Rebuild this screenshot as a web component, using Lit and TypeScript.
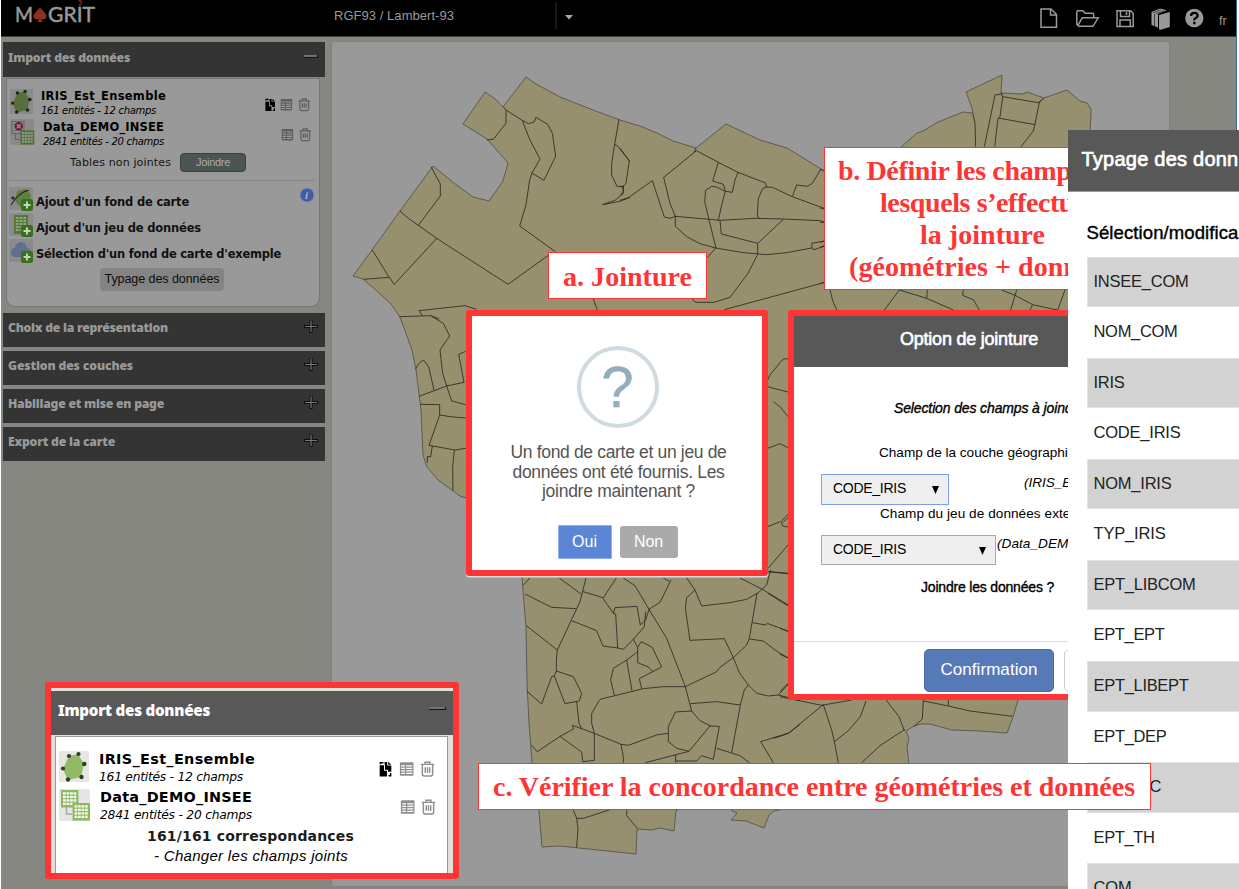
import { LitElement, html, css, svg } from 'lit';
import { customElement, property } from 'lit/decorators.js';

/** One line of text whose tracking is adjusted so that it spans `w` pixels. */
@customElement('fit-label')
class FitLabel extends LitElement {
  @property({ type: Number }) w = 0;
  static styles = css`
    :host { display: inline-block; white-space: pre; flex: none; }
  `;
  firstUpdated() {
    const natural = this.getBoundingClientRect().width;
    const n = (this.textContent || '').length;
    if (this.w && n) this.style.letterSpacing = `${((this.w - natural) / n).toFixed(3)}px`;
  }
  render() { return html`<slot></slot>`; }
}

const OUTLINE = 'M353 276L372 250 400 211 433 166 454 183 473 197 489 201 503 181 508 163 487 139 463 124 485 92 494 98 503 107 526 77 536 84 560 97 593 110 620 120 640 126 657 133 673 141 696 148 726 124 760 140 787 148 800 156 821 169 850 190 901 147 917 133 923 131 938 122 963 112 973 113 972 108 966 92 1002 75 1001 93 1023 94 1027 92 1044 98 1067 90 1080 101 1087 103 1091 109 1091 115 1090 130 1090 600 1018 700 1013 717 1007 733 980 731 952 730 930 724 921 724 914 726 906 731 909 738 907 747 909 764 880 790 774 811 769 815 764 828 746 821 731 820 737 813 732 811 715 790 676 811 674 831 660 828 652 830 637 829 636 854 560 846 542 847 539 811 532 763 529 723 527 683 526 627 522 578 500 530 466 498 460 496 438 480 427 467 423 455 421 410 416 370 412 350 400 317 391 304 377 291 363 279Z';

/** District borders, one entry per sheet: [x, y, path at triple scale]. */
const BORDERS: [number, number, string][] = [
  [330, 70, 'M520 110L528 120 528 160 490 208 470 210M528 120L578 152 596 161 612 156 618 142 653 163 667 190 677 258 642 331 606 309 630 267 600 210 582 165 578 152M606 309L599 330 588 405 569 468 676 545M655 556L534 643 320 505 265 466 235 445 210 423M303 290L331 342 331 378 265 466M320 505L193 643 173 615 127 540M100 628L176 622M867 148L854 223 845 280 845 315 861 349 881 349M854 223L863 228 898 273M881 349L879 372 855 391 818 404 870 394 900 382M790 687L802 720M440 718L405 707 267 722 277 737M208 740L302 737 328 747'],
  [620, 90, 'M0 175L28 212 18 280 8 290 0 290M8 290L10 305 0 317M0 331L25 323 97 272 133 381 150 385 166 379 270 388 300 391 405 385 490 387 600 392 615 397M230 182L223 187 131 262 150 340 166 379 166 409 200 440 240 461 287 474M228 174L223 187M230 182L295 217 354 247 437 279 439 291 428 296 415 325 412 378 418 385M439 291L457 292 517 320 615 356M602 238L577 280 562 289 530 285 517 320M295 217L278 273 310 283 316 304 337 307 345 270 354 247M316 304L290 291 275 289 257 301 254 335 266 385 288 474M316 304L305 345 295 391M300 391L304 432 413 460 490 388M413 460L413 493 384 550 330 622 282 637 226 637 217 627M287 474L262 503M287 474L370 488 440 494 500 488 575 474M615 453L575 460 576 475 582 479 615 468M615 577L313 659'],
  [820, 60, 'M467 260L465 190 458 159M493 260L525 105 545 102 548 112 540 170 534 176 524 260M548 110L655 128 672 115M543 98L547 103M662 122L658 128 645 192 640 213 603 260M534 174L645 194M0 328L12 331M0 444L12 447M0 487H12M0 547L12 543M0 562L12 557M0 671L12 667M30 690L38 722 50 750M193 750L238 690 320 715 400 750M322 690L320 715M430 690L428 706 460 719 478 750M545 690L585 706 638 734 712 750M590 690L572 750M638 734L630 750M735 690L713 750'],
  [330, 300, 'M302 47L340 70 359 108 330 150 338 220 350 258 365 303 407 314M257 207L265 192 280 180 296 200 312 270M267 289L350 258 402 247 386 163 407 154M271 313L329 314 329 345 297 436 375 450 407 445M329 345L360 350 407 354M307 438L302 470 292 470 292 488M373 450L368 500 369 572M1313 240L1320 225 1350 188M1313 260L1350 270M1313 445L1350 431M1313 680L1350 665'],
  [780, 300, 'M0 188L10 177 24 176M0 270L24 276M-20 305L0 320 24 350M0 431L24 443M24 643L3 665 8 678 24 681M24 653L8 668M24 735L-36 805M-36 815L24 821'],
  [500, 570, 'M70 45L90 24M75 72L155 112 228 116M258 24L240 95 172 240 169 270 169 303M178 24L243 72M247 64L308 83M349 24L309 85 340 130 347 132 353 234M340 130L345 113 411 109 421 165M353 234L370 238 403 205M215 152L290 182 309 228 353 234M370 24L405 47 447 118 500 205 556 350 575 423 600 452 632 468M447 118L437 150 421 165M437 125L433 170 400 208 413 232M424 215L457 232 485 291 418 326 425 357M424 215L413 232 413 278 445 291 457 304M447 118L480 97 513 30M490 24L507 34M413 245L380 270 340 295 332 330 343 375M380 270L396 362M79 167L172 240M80 363L125 402 155 320 163 318 169 303 220 320 245 370 238 393 195 401 163 318M230 395L237 460 245 476M556 350L490 350 430 356 300 388 275 430 275 460 283 490M94 525L112 545 180 499 221 477 217 466 283 490 363 523 385 526 470 495 504 490M180 499L245 546 248 575 283 571 283 490M363 523L370 560 370 578M436 578L567 544 630 468 658 469 640 568M640 568L605 557 590 573 527 573M527 555V578M575 423L526 426 505 470 505 515 530 535 567 544M572 401L650 395 720 405M556 350L650 305 660 292 700 263 740 225 748 205 771 70M560 24L585 60 605 108 690 98 740 88 775 68 800 45 812 0M585 60L560 83 556 115 570 211 673 206 700 263 718 308 745 345 770 370 805 378 835 375 900 392M745 345L733 360 722 400 695 548M650 535L720 557 748 578M720 24L787 58 865 105M757 158L797 165 802 160 865 184M748 207L790 213 835 247 865 264M835 375L865 342M900 463L867 489 782 515 820 578M808 5L865 10M220 720L230 745 234 775 230 833M230 745L250 745 328 720M380 720V737L412 775'],
  [780, 600, 'M0 290L125 316 215 300M130 314L25 400 0 409 -20 415M130 314L155 390 163 425 175 488M163 425L205 392 241 350 258 303M318 300L357 350 373 392M375 388L300 437 245 488M430 300L427 357 402 379M430 303L505 318 570 333 697 349M505 300V318M-36 -20L0 3 24 17M0 85L24 94M0 163L24 174M0 275L24 250'],
];

const polygonIcon = () => svg`<rect width="30" height="31" fill="#e6e6e6"/>
  <path d="M10 5L19 3 25 13 22 26 9 29 4 18Z" fill="#92b964"/>
  <g fill="#2f4022"><circle cx="10" cy="5" r="2.1"/><circle cx="19.5" cy="3" r="2.1"/><circle cx="25.3" cy="13" r="2.2"/><circle cx="22.5" cy="26" r="2.2"/><circle cx="9" cy="28.5" r="2.2"/><circle cx="4" cy="17.5" r="2.1"/></g>`;
const sheet = (x: number, y: number) => svg`<g transform="translate(${x} ${y})"><rect width="17.5" height="17.5" fill="#8cb862"/>
  <g fill="#f3f8ec">${[0, 1, 2, 3].map(r => [0, 1, 2, 3].map(c => svg`<rect x=${2 + c * 3.5} y=${2.2 + r * 3.5} width="2.8" height="2.4"/>`))}</g></g>`;
const joinIcon = (broken: boolean) => svg`<rect width="31" height="32" fill="#e6e6e6"/>
  <path d="M7.5 18V25H13" fill="none" stroke="#aaa" stroke-width="1.6"/>
  ${broken ? svg`<rect x="3" y="3" width="15" height="15" fill="#e9e9e9" stroke="#9b9b9b"/><path d="M4 7H17M4 14H17" stroke="#aaa"/>
    <circle cx="11.5" cy="9" r="5.2" fill="#c02a5c"/><path d="M9 6.5L14 11.5M14 6.5L9 11.5" stroke="#fff" stroke-width="1.6"/>` : sheet(2, 1)}
  ${sheet(13.5, 14)}`;
const plusBadge = svg`<rect x="12" y="12" width="12" height="12" rx="2.5" fill="#38701d"/><path d="M18 14.5V21.5M14.5 18H21.5" stroke="#c6d2c0" stroke-width="2"/>`;
const toolGlyph = (kind: string) => kind === 'copy'
  ? svg`<path fill="#000" d="M.5 4.5H5V10H8V16H.5ZM5.5 1H8.2V4.6H12.5V11H9V9H6V3.5H5.5Z"/><path d="M9.2 .8L12.4 3.8H9.2Z" fill="#000"/><path d="M1.2 3.4V1.7H4.4M9.6 15.2H11.8V12.4" fill="none" stroke="#000" stroke-width="1.5"/>`
  : kind === 'table'
  ? svg`<rect x=".7" y="1.2" width="14" height="14" rx="1" fill="var(--rim)"/><path d="M2 5H6M7.2 5H13.5M2 7.6H6M7.2 7.6H13.5M2 10.2H6M7.2 10.2H13.5M2 12.8H6M7.2 12.8H13.5" stroke="var(--paper)" stroke-width="1.3"/>`
  : svg`<path d="M.5 3.5H14.5M5 3.3V1.2H10V3.3M2.2 4V13.4Q2.2 15.4 4.2 15.4H10.8Q12.8 15.4 12.8 13.4V4M5.2 6.5V12M7.5 6.5V12M9.8 6.5V12" fill="none" stroke="var(--rim)" stroke-width="1.5"/>`;

@customElement('app-root')
class AppRoot extends LitElement {
  static styles = css`
    :host { display: block; position: relative; width: 1239px; height: 889px; overflow: hidden; background: #fff;
      font-family: "Liberation Sans", sans-serif; --red: #ff3535; }
    * { box-sizing: border-box; }
    svg { display: block; flex: none; }
    .page { height: 889px; margin-left: 1px; width: 1236px; border-right: 1px solid #2d6c98; background: #868780; display: flex; flex-direction: column; }
    .topbar { height: 37px; background: #000; border-bottom: 1px solid #40413d; display: flex; align-items: flex-start; color: #999; flex: none; }
    .logo { width: 333px; height: 36px; }
    .logo text { font: 21px Lato, sans-serif; fill: #999; stroke: #999; stroke-width: .5px; }
    .proj { width: 223px; padding-top: 8px; font-size: 13px; line-height: 16px; }
    .sep { width: 2px; height: 27px; margin-top: 2px; background: #171717; }
    .caret { margin: 15px 0 0 7px; width: 10px; height: 5px; }
    .tools { margin-left: 466px; width: 196px; height: 36px; }
    .tools text { font: 12.5px "Liberation Sans", sans-serif; fill: #999; }
    .work { display: flex; flex: 1; padding-top: 5px; }
    .side { width: 322px; margin-left: 2px; display: flex; flex-direction: column; gap: 4.2px; }
    .bar { height: 34px; background: #343434; color: #999; padding: 6px 7px 0 5px; display: flex; justify-content: space-between; flex: none;
      font: 900 12.2px/18px "Noto Sans", sans-serif; }
    .bar.open { height: 35px; padding-top: 7px; }
    .map { margin-left: 7px; width: 837px; height: 844px; background: #999; flex: none; box-shadow: 0 0 0 1px #80817b; }
    .panel { --paper: #999; --rim: #5e5e5e; width: 314px; height: 229px; margin: -3px 0 1.5px 3px; background: #999; border: 1px solid #757575; border-radius: 0 0 9px 9px; padding: 10px 0 0 2px;
      color: #000; font-family: "DejaVu Sans", sans-serif; display: flex; flex-direction: column; flex: none; }
    .layer { display: flex; height: 30px; align-items: flex-start; }
    .names { display: flex; flex-direction: column; align-items: flex-start; width: 226px; padding-left: 7px; flex: none; }
    .names .sub { margin-top: 1px; }
    .names.b { padding-left: 8px; padding-top: 1px; }
    .title { font-weight: bold; font-size: 11.5px; line-height: 15px; height: 14px; }
    .sub { font-style: italic; font-size: 10px; line-height: 14px; }
    .acts { display: flex; gap: 5px; padding-top: 9px; width: 50px; justify-content: flex-end; }
    .pend { display: flex; align-items: center; gap: 9px; height: 20px; margin: 3px 0 0 61px; font-size: 11px; color: #151515; }
    .join { width: 66px; height: 19px; border-radius: 4px; background: #4b5553; border: 1px solid #39413f; color: #aaa; display: grid; place-items: center; font: 11px "Liberation Sans", sans-serif; }
    .rule { height: 1px; background: #858585; margin: 8px 4px 6px 0; flex: none; }
    .add { display: flex; height: 25.8px; align-items: flex-start; gap: 3px; font-weight: bold; font-size: 11.5px; line-height: 30px; color: #111; flex: none; }
    .info { margin-left: auto; margin-right: 4px; }
    .info text { font: italic bold 11px "Liberation Serif", serif; fill: #aab4d8; }
    .type { align-self: center; margin: 3px 4px 0 0; width: 124px; height: 23px; border-radius: 4px; background: #848484; display: grid; place-items: center; font: 12.5px "Liberation Sans", sans-serif; color: #0c0c0c; flex: none; }

    .inset { position: absolute; left: 45px; top: 682px; width: 414px; height: 197px; border: 6px solid var(--red); border-radius: 3px; background: #e1e0d8; padding-top: 3px; --paper: #fff; --rim: #8e8e8e;
      font-family: "DejaVu Sans", sans-serif; color: #000; }
    .ibar { height: 44px; background: #585858; color: #fff; padding: 8px 7px 0 7px; display: flex; justify-content: space-between; font: 900 15.2px/22px "Noto Sans", sans-serif; }
    .ibar svg { margin-top: 2px; }
    .ipanel { margin: 1px 0 0 4px; width: 393px; height: 137px; background: #fff; border: 1.5px solid #999; border-bottom: 0; padding: 14px 0 0 3px; }
    .ipanel .layer { height: 38px; }
    .ipanel .names { width: 290px; padding-left: 10px; padding-top: 0; }
    .ipanel .title { font-size: 14.4px; line-height: 17px; height: 17px; }
    .ipanel .sub { font-size: 12.3px; line-height: 18px; margin-top: 0; }
    .ipanel .acts { gap: 6.5px; padding-top: 10px; width: 56px; }
    .match { display: flex; flex-direction: column; align-items: flex-start; padding: 0 0 0 88px; margin-top: -1px; }
    .match .m1 { font-weight: bold; font-size: 14px; line-height: 20px; color: #1c1c1c; }
    .match .m2 { font: italic 15px/20px "Liberation Sans", sans-serif; margin-left: 7px; }

    .label { position: absolute; background: #fff; border: 1.5px solid var(--red); color: var(--red); font: bold 28px/32px "Liberation Serif", serif; white-space: nowrap; }
    .la { left: 548px; top: 252px; width: 159px; height: 47px; padding: 8px 0 0 14px; }
    .lb { left: 824px; top: 147px; width: 260px; height: 143px; padding: 7px 0 0 13px; display: flex; flex-direction: column; align-items: flex-start; }
    .lb .n2 { padding-left: 42px; }
    .lb .n3 { padding-left: 82px; }
    .lb .n4 { padding-left: 11px; }
    .lc { left: 478px; top: 763px; width: 673px; height: 47px; padding: 7px 0 0 14px; }

    .ask { position: absolute; left: 466px; top: 310px; width: 302px; height: 266px; border: 6px solid var(--red); border-radius: 3px; background: #fff; box-shadow: 0 1.5px 0 #ddd; display: flex; flex-direction: column; align-items: center; padding: 30px 0 0 1px; color: #545454; }
    .ring { width: 82px; height: 82px; border-radius: 50%; border: 4px solid #d0dae1; display: grid; place-items: center; color: #94adbd; font-size: 58px; line-height: 72px; -webkit-text-stroke: .5px #94adbd; }
    .msg { display: flex; flex-direction: column; align-items: center; margin: 15px 0 0 2px; font-size: 17.5px; line-height: 19.6px; }
    .yesno { display: flex; gap: 8px; margin-top: 23px; color: #fff; font-size: 16px; align-items: center; }
    .yes { width: 54px; height: 34px; background: #5a86d5; border: 1px solid #8fb0f5; display: grid; place-items: center; border-radius: 1px; }
    .no { width: 58px; height: 32px; background: #aaa; border-radius: 3px; display: grid; place-items: center; }

    .opt { position: absolute; left: 788px; top: 310px; width: 300px; height: 390px; border: 6px solid var(--red); border-radius: 3px; background: #fff; overflow: hidden; color: #000; font-size: 13.6px; line-height: 20px; display: flex; flex-direction: column; align-items: flex-start; }
    .ohead { width: 100%; height: 51px; flex: none; background: #585858; color: #fff; padding: 13px 0 0 106px; font-size: 18px; -webkit-text-stroke: .6px #fff; }
    .strong { -webkit-text-stroke: .35px #000; }
    .o1 { margin: 31px 0 0 100px; font-style: italic; font-size: 14px; }
    .o2 { margin: 25px 0 0 85px; }
    .pair { display: flex; height: 31px; align-items: flex-start; margin: 10.5px 0 0 27px; }
    .sel { width: 128px; height: 31px; background: #efefef; border: 1.5px solid #7d9fe8; padding: 3px 9px 0 11px; display: flex; justify-content: space-between; font-size: 14px; }
    .sel.wide { width: 175px; border-color: #a9a9a9; height: 30px; }
    .tri { width: 7px; height: 8px; margin-top: 8px; }
    .em { font-style: italic; margin: -1px 0 0 75px; }
    .wide + .em { margin: -1px 0 0 1px; }
    .o3 { margin: -.5px 0 0 86px; }
    .o4 { margin: 11px 0 0 127px; font-size: 14px; }
    .foot { width: 100%; border-top: 1px solid #ddd; margin-top: 44px; padding: 7px 0 0 130px; display: flex; gap: 10px; }
    .ok { width: 130px; height: 43px; background: #567ab7; border: 1px solid #486aa5; border-radius: 5px; color: #fff; font-size: 17px; display: grid; place-items: center; flex: none; }
    .cancel { width: 80px; height: 43px; border: 1px solid #ccc; border-radius: 5px; flex: none; }

    .types { position: absolute; left: 1068px; top: 130px; width: 171px; height: 759px; overflow: hidden; background: #fff; }
    .thead { height: 62px; background: #585858; border-bottom: 1px solid #999; color: #fff; padding: 17px 0 0 13.5px; font-size: 20px; line-height: 25px; -webkit-text-stroke: .7px #fff; }
    .tsub { padding: 30px 0 0 18.5px; height: 64.5px; font-size: 18.5px; line-height: 22px; color: #000; -webkit-text-stroke: .4px #000; }
    .row { margin-left: 18.5px; height: 50.57px; padding: 13px 0 0 7px; font-size: 16.5px; line-height: 22px; color: #222; }
    .row.g { background: #d2d2d2; border: solid #e2e2e2; border-width: 1px 0 1px 1px; padding: 12px 0 0 6px; }
    .row.cut { padding-left: 62px; }
  `;

  private sign(open: boolean, w = 14) {
    return html`<svg width=${w} height="14" viewBox="0 0 14 14" preserveAspectRatio="none">${open
      ? svg`<path d="M0 7.6H14" stroke="#111" stroke-width="2.6"/><path d="M0 7H13" stroke="#999" stroke-width="1.4"/>`
      : svg`<path d="M7 1V14M0 7.5H14" stroke="#0e0e0e" stroke-width="3.2"/><path d="M7 1.5V13M1 7.5H13" stroke="#777" stroke-width="1.2"/>`}</svg>`;
  }

  private acts(kinds: string[], size: number) {
    return html`<div class="acts">${kinds.map(k => html`<svg width=${k === 'copy' ? size - 2 : size} height=${size + 1} viewBox="0 0 ${k === 'copy' ? 13 : 15} 16.5">${toolGlyph(k)}</svg>`)}</div>`;
  }

  private topbar() {
    return html`<div class="topbar">
      <svg class="logo" viewBox="1 0 333 36">
        <text x="15" y="22" textLength="18" lengthAdjust="spacingAndGlyphs">M</text>
        <path d="M40 7C42 11 47 13 46.4 17 45.8 20 42 20 40.8 18.4L42.5 22H37.5L39.2 18.4C38 20 34.2 20 33.6 17 33 13 38 11 40 7Z" fill="#8c3020"/>
        <text x="48" y="22" textLength="47">GRIT</text>
        <path d="M78.6 1.6Q80 0 81.2 1.5T80 4.2V6" fill="none" stroke="#8c2020" stroke-width="1.4"/>
      </svg>
      <div class="proj"><fit-label w="120">RGF93 / Lambert-93</fit-label></div>
      <div class="sep"></div>
      <svg class="caret" viewBox="0 0 10 5"><path d="M1 0H9L5 4.5Z" fill="#aaa"/></svg>
      <svg class="tools" viewBox="1041 0 196 36" fill="none" stroke="#999" stroke-width="1.5">
        <path d="M1042 9H1052L1057.5 14.5V27.2H1042ZM1051.5 9V15H1057.5"/>
        <path d="M1080 26.3L1077.8 24.5V12Q1077.8 10.8 1079 10.8H1084L1086 13.2H1093.5Q1094.7 13.2 1094.7 14.5V17M1078.6 25.8L1083.2 17.8H1099.2L1094 26.3H1079.2"/>
        <path d="M1118 10.8H1131.5L1134.2 13.5V26.5H1118ZM1121.5 10.8V16.5H1130.5V10.8M1121 26.5V20H1131.3V26.5M1127.5 12V15"/>
        <g fill="#999" stroke="none"><path d="M1152.5 12L1161 8.5 1167.5 10.3 1159 14V27.5L1152.5 25Z"/><path d="M1160 15L1170.8 12V27L1161 30 1160 29Z"/><circle cx="1195.3" cy="18" r="9.2"/></g>
        <path d="M1155.5 14V26M1154 12.8L1162 9.8M1157 13.8L1165 10.8" stroke="#000" stroke-width=".6"/>
        <path d="M1192 15.8Q1192.2 12.8 1195.4 12.8T1198.6 15.6Q1198.5 17.2 1196.8 18.1T1195.3 20.3M1195.3 21.8V24.2" stroke="#000" stroke-width="2.3"/>
        <text x="1220" y="24.5" stroke="none">fr</text>
      </svg>
    </div>`;
  }

  private sidebar() {
    return html`<div class="side">
      <div class="bar open"><fit-label w="122">Import des données</fit-label>${this.sign(true)}</div>
      <div class="panel">
        <div class="layer"><svg width="25" height="25" viewBox="0 0 30 31">${polygonIcon()}<rect width="30" height="31" fill="#000" opacity=".4"/></svg>
          <div class="names"><fit-label class="title" w="125">IRIS_Est_Ensemble</fit-label><fit-label class="sub" w="115">161 entités - 12 champs</fit-label></div>
          ${this.acts(['copy', 'table', 'trash'], 12.5)}</div>
        <div class="layer"><svg width="26" height="26" viewBox="0 0 31 32">${joinIcon(true)}<rect width="31" height="32" fill="#000" opacity=".4"/></svg>
          <div class="names b"><fit-label class="title" w="121">Data_DEMO_INSEE</fit-label><fit-label class="sub" w="121">2841 entités - 20 champs</fit-label></div>
          ${this.acts(['table', 'trash'], 12.5)}</div>
        <div class="pend"><fit-label w="101">Tables non jointes</fit-label><div class="join"><fit-label w="34">Joindre</fit-label></div></div>
        <div class="rule"></div>
        <div class="add"><svg width="24" height="24"><rect width="24" height="23" fill="#8b8b8b"/><path d="M8 4L17 2 22 8 20 17 12 21 6 14Z" fill="#5c8040"/><path d="M2 18Q10 5 20 3" fill="none" stroke="#222" stroke-width="1.1"/><circle cx="4" cy="11" r="1.6" fill="#222"/>${plusBadge}</svg>
          <fit-label w="153">Ajout d'un fond de carte</fit-label>
          <svg class="info" width="16" height="16"><circle cx="8" cy="8" r="7" fill="#445ba0" stroke="#7f8bb5"/><text x="6" y="12">i</text></svg></div>
        <div class="add"><svg width="24" height="24"><rect width="24" height="23" fill="#8b8b8b"/><rect x="5" y="2" width="14" height="19" fill="#557a35"/><path d="M7 5H17M7 8H17M7 11H17M7 14H17M7 17H17" stroke="#a5b294" stroke-width="1.6"/><path d="M10 3V20M14 3V20" stroke="#557a35"/>${plusBadge}</svg>
          <fit-label w="165">Ajout d'un jeu de données</fit-label></div>
        <div class="add"><svg width="24" height="24"><rect width="24" height="23" fill="#8b8b8b"/><path d="M5 18Q1 17 2 12 3 9 6 9 7 3 12 3T18 9Q22 10 22 14T18 18Z" fill="#5f6f8c"/>${plusBadge}</svg>
          <fit-label w="245">Sélection d'un fond de carte d'exemple</fit-label></div>
        <div class="type"><fit-label w="115">Typage des données</fit-label></div>
      </div>
      ${([['Choix de la représentation', 160], ['Gestion des couches', 125], ['Habillage et mise en page', 156], ['Export de la carte', 107]] as [string, number][])
        .map(([t, w]) => html`<div class="bar"><fit-label w=${w}>${t}</fit-label>${this.sign(false)}</div>`)}
    </div>`;
  }

  render() {
    const rows: [string, number][] = [['INSEE_COM', 95], ['NOM_COM', 84], ['IRIS', 31], ['CODE_IRIS', 87], ['NOM_IRIS', 78], ['TYP_IRIS', 72], ['EPT_LIBCOM', 102], ['EPT_EPT', 71], ['EPT_LIBEPT', 95], ['EPT_DEP', 73], ['C', 0], ['EPT_TH', 61], ['COM', 38]];
    return html`
      <div class="page">
        ${this.topbar()}
        <div class="work">
          ${this.sidebar()}
          <svg class="map" viewBox="332 42 837 844">
            <path d=${OUTLINE} fill="#96906f" stroke="#55554c" stroke-width=".9"/>
            ${BORDERS.map(([x, y, d]) => svg`<g transform="translate(${x} ${y}) scale(.33333)"><path d=${d} fill="none" stroke="#292820" stroke-width="2.5"/></g>`)}
          </svg>
        </div>
      </div>

      <div class="label la"><fit-label w="129">a. Jointure</fit-label></div>
      <div class="label lb">
        <fit-label w="244">b. Définir les champs</fit-label>
        <span class="n2"><fit-label w="206">lesquels s’effectue</fit-label></span>
        <span class="n3"><fit-label w="125">la jointure</fit-label></span>
        <span class="n4"><fit-label w="230">(géométries + donn</fit-label></span>
      </div>

      <div class="ask">
        <div class="ring">?</div>
        <div class="msg"><fit-label w="216">Un fond de carte et un jeu de</fit-label><fit-label w="212">données ont été fournis. Les</fit-label><fit-label w="153">joindre maintenant ?</fit-label></div>
        <div class="yesno"><div class="yes"><fit-label w="25">Oui</fit-label></div><div class="no"><fit-label w="29">Non</fit-label></div></div>
      </div>

      <div class="opt">
        <div class="ohead"><fit-label w="138">Option de jointure</fit-label></div>
        <div class="o1 strong"><fit-label w="183">Selection des champs à joindr</fit-label></div>
        <div class="o2"><fit-label w="204">Champ de la couche géographiqu</fit-label></div>
        <div class="pair"><div class="sel"><fit-label w="73">CODE_IRIS</fit-label><svg class="tri" viewBox="0 0 8 9"><path d="M0 0H8L4 9Z"/></svg></div><div class="em"><fit-label w="54">(IRIS_Es</fit-label></div></div>
        <div class="o3"><fit-label w="195">Champ du jeu de données exter</fit-label></div>
        <div class="pair"><div class="sel wide"><fit-label w="73">CODE_IRIS</fit-label><svg class="tri" viewBox="0 0 8 9"><path d="M0 0H8L4 9Z"/></svg></div><div class="em"><fit-label w="82">(Data_DEMO</fit-label></div></div>
        <div class="o4 strong"><fit-label w="133">Joindre les données ?</fit-label></div>
        <div class="foot"><div class="ok"><fit-label w="97">Confirmation</fit-label></div><div class="cancel"></div></div>
      </div>

      <div class="types">
        <div class="thead"><fit-label w="157">Typage des donn</fit-label></div>
        <div class="tsub"><fit-label w="152">Sélection/modifica</fit-label></div>
        ${rows.map(([t, w], i) => html`<div class="row ${i % 2 ? '' : 'g'} ${t === 'C' ? 'cut' : ''}"><fit-label w=${w}>${t}</fit-label></div>`)}
      </div>

      <div class="label lc"><fit-label w="642">c. Vérifier la concordance entre géométries et données</fit-label></div>

      <div class="inset">
        <div class="ibar"><fit-label w="152">Import des données</fit-label>${this.sign(true, 17)}</div>
        <div class="ipanel">
          <div class="layer"><svg width="30" height="31">${polygonIcon()}</svg>
            <div class="names"><fit-label class="title" w="156">IRIS_Est_Ensemble</fit-label><fit-label class="sub" w="144">161 entités - 12 champs</fit-label></div>
            ${this.acts(['copy', 'table', 'trash'], 15)}</div>
          <div class="layer"><svg width="31" height="32">${joinIcon(false)}</svg>
            <div class="names"><fit-label class="title" w="152">Data_DEMO_INSEE</fit-label><fit-label class="sub" w="152">2841 entités - 20 champs</fit-label></div>
            ${this.acts(['table', 'trash'], 15)}</div>
          <div class="match"><fit-label class="m1" w="207">161/161 correspondances</fit-label><fit-label class="m2" w="194">- Changer les champs joints</fit-label></div>
        </div>
      </div>`;
  }
}
